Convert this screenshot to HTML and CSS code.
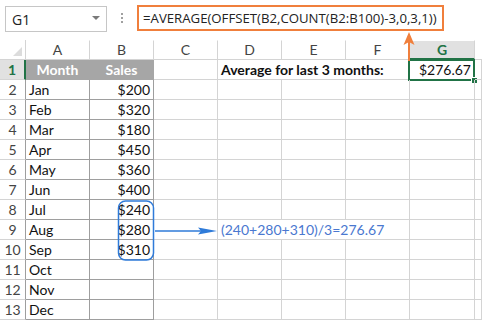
FILE: index.html
```html
<!DOCTYPE html>
<html>
<head>
<meta charset="utf-8">
<link rel="stylesheet" href="styles.css">
</head>
<body>
<div class="page">
  <div class="bar">
    <div class="namebox"><span class="nb-text">G1</span><span class="nb-caret"></span></div>
    <div class="dots"><i></i><i></i><i></i></div>
    <div class="formula">=AVERAGE(OFFSET(B2,COUNT(B2:B100)-3,0,3,1))</div>
  </div>
  <div class="sheet">
    <div class="c corner"><span class="tri"></span></div>
    <div class="c hd">A</div><div class="c hd">B</div><div class="c hd">C</div><div class="c hd">D</div><div class="c hd">E</div><div class="c hd">F</div><div class="c hd sel">G</div><div class="c hd last"></div>

    <div class="c rh rsel">1</div><div class="c th">Month</div><div class="c th">Sales</div><div class="c"></div><div class="c b span3">Average for last 3 months:</div><div class="c r g1">$276.67</div><div class="c"></div>

    <div class="c rh tb">2</div><div class="c t">Jan</div><div class="c t r">$200</div><div class="c"></div><div class="c"></div><div class="c"></div><div class="c"></div><div class="c"></div><div class="c"></div>
    <div class="c rh tb">3</div><div class="c t">Feb</div><div class="c t r">$320</div><div class="c"></div><div class="c"></div><div class="c"></div><div class="c"></div><div class="c"></div><div class="c"></div>
    <div class="c rh tb">4</div><div class="c t">Mar</div><div class="c t r">$180</div><div class="c"></div><div class="c"></div><div class="c"></div><div class="c"></div><div class="c"></div><div class="c"></div>
    <div class="c rh tb">5</div><div class="c t">Apr</div><div class="c t r">$450</div><div class="c"></div><div class="c"></div><div class="c"></div><div class="c"></div><div class="c"></div><div class="c"></div>
    <div class="c rh tb">6</div><div class="c t">May</div><div class="c t r">$360</div><div class="c"></div><div class="c"></div><div class="c"></div><div class="c"></div><div class="c"></div><div class="c"></div>
    <div class="c rh tb">7</div><div class="c t">Jun</div><div class="c t r">$400</div><div class="c"></div><div class="c"></div><div class="c"></div><div class="c"></div><div class="c"></div><div class="c"></div>
    <div class="c rh tb">8</div><div class="c t">Jul</div><div class="c t r">$240</div><div class="c"></div><div class="c"></div><div class="c"></div><div class="c"></div><div class="c"></div><div class="c"></div>
    <div class="c rh tb">9</div><div class="c t">Aug</div><div class="c t r">$280</div><div class="c"></div><div class="c note span3">(240+280+310)/3=276.67</div><div class="c"></div><div class="c"></div>
    <div class="c rh tb">10</div><div class="c t">Sep</div><div class="c t r">$310</div><div class="c"></div><div class="c"></div><div class="c"></div><div class="c"></div><div class="c"></div><div class="c"></div>
    <div class="c rh tb">11</div><div class="c t">Oct</div><div class="c t r"></div><div class="c"></div><div class="c"></div><div class="c"></div><div class="c"></div><div class="c"></div><div class="c"></div>
    <div class="c rh tb">12</div><div class="c t">Nov</div><div class="c t r"></div><div class="c"></div><div class="c"></div><div class="c"></div><div class="c"></div><div class="c"></div><div class="c"></div>
    <div class="c rh tb">13</div><div class="c t">Dec</div><div class="c t r"></div><div class="c"></div><div class="c"></div><div class="c"></div><div class="c"></div><div class="c"></div><div class="c"></div>
  </div>
  <svg class="overlay" width="482" height="321" viewBox="0 0 482 321">
    <line x1="409" y1="40" x2="409" y2="61" stroke="#f07f3c" stroke-width="2"/>
    <path d="M409 32 L414.5 45 L409 42 L403.5 45 Z" fill="#f07f3c"/>
    <rect x="118.5" y="201" width="35" height="59" rx="7" ry="7" fill="none" stroke="#2f7bd9" stroke-width="1.5"/>
    <line x1="155" y1="231" x2="203" y2="231" stroke="#2f7bd9" stroke-width="1.5"/>
    <path d="M198 227.5 L217 231 L198 234.5 L201 231 Z" fill="#2f7bd9"/>
  </svg>
</div>
</body>
</html>
```
FILE: styles.css
```css
html, body {
  margin: 0;
  padding: 0;
  background: #fff;
}
.page {
  position: relative;
  width: 482px;
  height: 321px;
  overflow: hidden;
  font-family: Lato, "Liberation Sans", sans-serif;
}
.bar {
  height: 40px;
  display: flex;
  align-items: flex-start;
  box-sizing: border-box;
  padding: 5px 0 0 5px;
}
.namebox {
  margin-top: 1px;
  width: 102px;
  height: 26px;
  box-sizing: border-box;
  border: 1px solid #c6c6c6;
  display: flex;
  align-items: center;
  justify-content: space-between;
  padding: 0 6px 0 6px;
  font-family: "Open Sans", "Liberation Sans", sans-serif;
  font-size: 14px;
  color: #222;
}
.nb-caret {
  width: 0;
  height: 0;
  border-left: 4px solid transparent;
  border-right: 4px solid transparent;
  border-top: 4px solid #7a7a7a;
  margin-top: -3px;
}
.dots {
  width: 30px;
  display: flex;
  flex-direction: column;
  align-items: center;
  gap: 2px;
  padding-top: 8px;
}
.dots i {
  display: block;
  width: 2px;
  height: 2px;
  background: #a0a0a0;
}
.formula {
  flex: none;
  width: 307px;
  height: 26px;
  box-sizing: border-box;
  border: 2px solid #f07f3c;
  padding: 0 0 0 4px;
  line-height: 22px;
  font-family: "Open Sans", "Liberation Sans", sans-serif;
  font-size: 13.2px;
  color: #222;
  white-space: nowrap;
  overflow: hidden;
}
.sheet {
  display: grid;
  grid-template-columns: 26px repeat(6, 64px) 65px 1fr;
  grid-auto-rows: 20px;
  font-size: 14px;
  color: #111;
}
.c {
  box-sizing: border-box;
  border-right: 1px solid #d4d4d4;
  border-bottom: 1px solid #d4d4d4;
  padding: 0 3px;
  line-height: 19px;
  white-space: nowrap;
  position: relative;
}
.corner {
  background: #fff;
}
.tri {
  position: absolute;
  right: 3px;
  bottom: 3px;
  width: 0;
  height: 0;
  border-left: 9px solid transparent;
  border-bottom: 9px solid #dcdcdc;
}
.hd {
  text-align: center;
  color: #444;
  background: #fff;
  border-top: 1px solid #fff;
  line-height: 18px;
}
.hd.last {
  border-right: none;
}
.hd.sel {
  background: #e1e1e1;
  color: #217346;
  font-weight: bold;
  border-bottom: 2px solid #217346;
}
.rh {
  text-align: center;
  color: #444;
  padding: 0;
}
.rh.tb {
  border-right-color: #9e9e9e;
}
.rsel {
  background: #e1e1e1;
  color: #217346;
  font-weight: bold;
  border-right: 2px solid #217346;
}
.th {
  background: #a6a6a6;
  color: #fff;
  font-weight: bold;
  text-align: center;
  border-right-color: #a6a6a6;
  border-bottom-color: #a6a6a6;
}
.t {
  border-right-color: #9e9e9e;
  border-bottom-color: #9e9e9e;
}
.r {
  text-align: right;
}
.b {
  font-weight: bold;
}
.span3 {
  grid-column: span 3;
}
.note {
  color: #4a78d0;
}
.g1::before {
  content: "";
  position: absolute;
  left: -2px;
  top: -1px;
  right: -1px;
  bottom: -2px;
  border: 2px solid #217346;
}
.g1::after {
  content: "";
  position: absolute;
  right: -4px;
  bottom: -5px;
  width: 5px;
  height: 5px;
  background: #217346;
  border: 1px solid #fff;
}
.overlay {
  position: absolute;
  left: 0;
  top: 0;
  pointer-events: none;
}
```
